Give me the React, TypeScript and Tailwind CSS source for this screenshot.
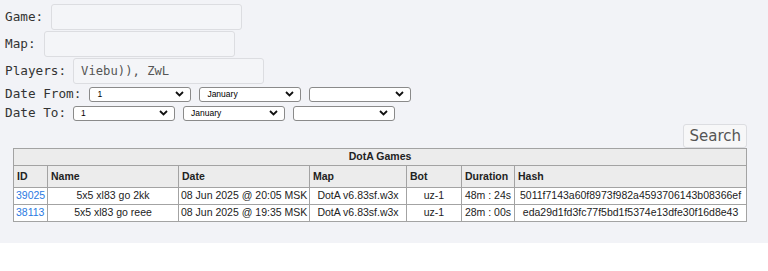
import React from "react";

const mono = { fontFamily: '"DejaVu Sans Mono", "Liberation Mono", monospace' };

function Chevron() {
  return (
    <svg width="9" height="6" viewBox="0 0 9 6" className="shrink-0">
      <path d="M1 1 L4.5 4.5 L8 1" fill="none" stroke="#111" strokeWidth="1.8" />
    </svg>
  );
}

function Sel({ text }: { text: string }) {
  return (
    <div className="w-[102px] h-[15px] bg-white border border-[#8a8a8a] rounded-[3px] flex items-center justify-between pl-[7px] pr-[6px]">
      <span className="text-[8.5px] text-black leading-none" style={{ fontFamily: '"Liberation Sans", Arial, sans-serif' }}>
        {text}
      </span>
      <Chevron />
    </div>
  );
}

function InputRow({ label, value, gap }: { label: string; value?: string; gap: string }) {
  return (
    <div className="flex items-center h-[26px] mb-[1px]">
      <span className={`text-[12.7px] text-[#333] ${gap}`} style={mono}>
        {label}
      </span>
      <div className="w-[191px] h-[26px] border border-[#dcdde1] rounded-[3px] bg-[#f4f5f8] flex items-center pl-[7px]">
        {value && (
          <span className="text-[12.2px] text-[#555]" style={mono}>
            {value}
          </span>
        )}
      </div>
    </div>
  );
}

const rows = [
  {
    id: "39025",
    name: "5x5 xl83 go 2kk",
    date: "08 Jun 2025 @ 20:05 MSK",
    map: "DotA v6.83sf.w3x",
    bot: "uz-1",
    dur: "48m : 24s",
    hash: "5011f7143a60f8973f982a4593706143b08366ef",
  },
  {
    id: "38113",
    name: "5x5 xl83 go reee",
    date: "08 Jun 2025 @ 19:35 MSK",
    map: "DotA v6.83sf.w3x",
    bot: "uz-1",
    dur: "28m : 00s",
    hash: "eda29d1fd3fc77f5bd1f5374e13dfe30f16d8e43",
  },
];

export default function App() {
  const th = "border border-[#a3a3a3] text-left font-bold px-[3px] text-[#222]";
  const td = "border border-[#a3a3a3] text-center px-[2px] bg-white text-[#222] whitespace-nowrap";
  return (
    <div className="w-[768px] h-[271px] bg-white">
      <div className="bg-[#f2f3f7] h-[243px] pt-[4px] pl-[5px]">
        <InputRow label="Game:" gap="mr-[8px]" />
        <InputRow label="Map:" gap="mr-[8px]" />
        <InputRow label="Players:" value="Viebu)), ZwL" gap="mr-[7px]" />
        <div className="flex items-center h-[18px] mt-[1px]">
          <span className="text-[12.7px] text-[#333] mr-[8px]" style={mono}>
            Date From:
          </span>
          <div className="flex gap-[8px]">
            <Sel text="1" />
            <Sel text="January" />
            <Sel text="" />
          </div>
        </div>
        <div className="flex items-center h-[18px] mt-[1px]">
          <span className="text-[12.7px] text-[#333] mr-[7px]" style={mono}>
            Date To:
          </span>
          <div className="flex gap-[8px]">
            <Sel text="1" />
            <Sel text="January" />
            <Sel text="" />
          </div>
        </div>
        <div className="flex justify-end pr-[21px] mt-[2px]">
          <div
            className="h-[24px] px-[5px] border border-[#dcdde1] rounded-[3px] bg-[#f7f7f8] flex items-center text-[15px] text-[#555]"
            style={{ fontFamily: '"DejaVu Sans", "Liberation Sans", sans-serif' }}
          >
            Search
          </div>
        </div>
        <table
          className="ml-[8px] border-collapse table-fixed w-[733px] text-[10.5px] bg-[#ececec] border border-[#a3a3a3]"
          style={{ fontFamily: '"Liberation Sans", Arial, sans-serif' }}
        >
          <colgroup>
            <col style={{ width: 34 }} />
            <col style={{ width: 131 }} />
            <col style={{ width: 131 }} />
            <col style={{ width: 97 }} />
            <col style={{ width: 55 }} />
            <col style={{ width: 53 }} />
            <col style={{ width: 232 }} />
          </colgroup>
          <thead>
            <tr className="h-[17px]">
              <th colSpan={7} className="border border-[#a3a3a3] text-center font-bold text-[#222]">
                DotA Games
              </th>
            </tr>
            <tr className="h-[22px]">
              <th className={th}>ID</th>
              <th className={th}>Name</th>
              <th className={th}>Date</th>
              <th className={th}>Map</th>
              <th className={th}>Bot</th>
              <th className={th}>Duration</th>
              <th className={th}>Hash</th>
            </tr>
          </thead>
          <tbody>
            {rows.map((r) => (
              <tr key={r.id} className="h-[17px]">
                <td className="border border-[#a3a3a3] bg-white px-[2px] text-left">
                  <span className="text-[#2a7ae2]">{r.id}</span>
                </td>
                <td className={td}>{r.name}</td>
                <td className={td}>{r.date}</td>
                <td className={td}>{r.map}</td>
                <td className={td}>{r.bot}</td>
                <td className={td}>{r.dur}</td>
                <td className={td}>{r.hash}</td>
              </tr>
            ))}
          </tbody>
        </table>
      </div>
    </div>
  );
}
